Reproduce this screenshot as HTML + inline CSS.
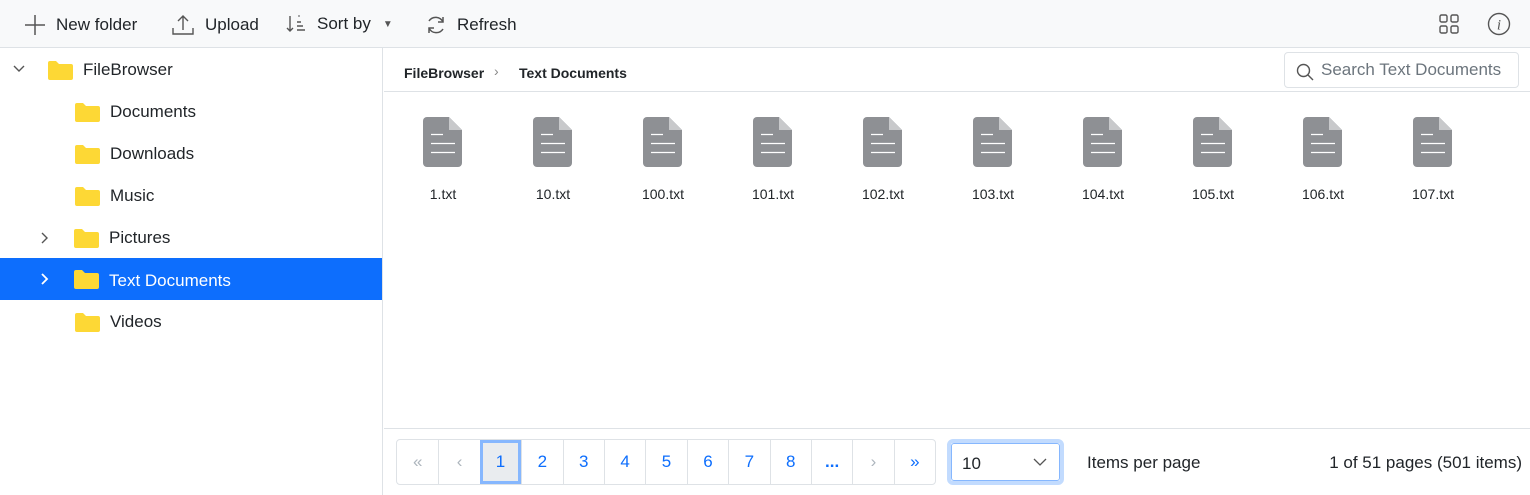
<!DOCTYPE html>
<html><head><meta charset="utf-8"><style>
*{box-sizing:border-box;margin:0;padding:0}
body{width:1530px;height:495px;overflow:hidden;background:#fff;font-family:"Liberation Sans",sans-serif;color:#212529;position:relative}
.tb{position:absolute;left:0;top:0;width:1530px;height:48px;background:#f8f9fa;border-bottom:1px solid #dee2e6}
.tbi{position:absolute;top:14px;font-size:17px;color:#212529;display:flex;align-items:center}
.tbi svg{margin-right:10px}
.left{position:absolute;left:0;top:48px;width:383px;height:447px;border-right:1px solid #dee2e6}
.row{position:absolute;left:0;width:382px;height:42px;font-size:17px;display:flex;align-items:center;margin-top:1px}
.row .fd{position:absolute;top:11px}
.row span{position:absolute}
.sel{background:#0d6efd;color:#fff;margin-top:0}
.bc{position:absolute;left:384px;top:48px;width:1146px;height:44px;border-bottom:1px solid #dee2e6;font-size:14px}
.file{position:absolute;top:116px;width:80px;text-align:center;font-size:14px}
.file svg{display:block;margin:0 auto 18px}
.pg{position:absolute;left:384px;top:428px;width:1146px;height:67px;border-top:1px solid #dee2e6}
.pgr{position:absolute;left:12px;top:10px;height:46px;border:1px solid #dee2e6;border-radius:4px;display:flex}
.pgr div{width:41.4px;height:44px;border-left:1px solid #dee2e6;display:flex;align-items:center;justify-content:center;color:#0d6efd;font-size:17px}
.pgr div:first-child{border-left:none}
</style></head><body>
<div class="tb">
 <div class="tbi" style="left:24px"><svg width="22" height="22" viewBox="0 0 22 22"><path d="M11 1v20M1 11h20" stroke="#555" stroke-width="1.5"/></svg>New folder</div>
 <div class="tbi" style="left:171px"><svg width="24" height="22" viewBox="0 0 24 22"><path d="M12 2v14M7 7l5-5 5 5M2 14v6h20v-6" stroke="#555" stroke-width="1.4" fill="none"/></svg>Upload</div>
 <div class="tbi" style="left:285px"><svg width="22" height="20" viewBox="0 0 22 20"><path d="M5 2v15M2 14l3 3 3-3M12 8h4M12 12h6M12 16h8" stroke="#555" stroke-width="1.4" fill="none"/><path d="M13 2l2 0" stroke="#555"/></svg>Sort by<span style="margin-left:12px;font-size:10px;color:#555">▼</span></div>
 <div class="tbi" style="left:425px"><svg width="22" height="22" viewBox="0 0 22 22"><path d="M18 8a8 8 0 0 0-14-1M4 14a8 8 0 0 0 14 1" stroke="#555" stroke-width="1.5" fill="none"/><path d="M18 3v5h-5M4 19v-5h5" stroke="#555" stroke-width="1.5" fill="none"/></svg>Refresh</div>
 <svg style="position:absolute;left:1439px;top:14px" width="21" height="20" viewBox="0 0 21 20"><g fill="none" stroke="#555" stroke-width="1.4"><rect x="1" y="1" width="7" height="7" rx="1.5"/><rect x="12" y="1" width="7" height="7" rx="1.5"/><rect x="1" y="12" width="7" height="7" rx="1.5"/><rect x="12" y="12" width="7" height="7" rx="1.5"/></g></svg>
 <svg style="position:absolute;left:1487px;top:12px" width="24" height="24" viewBox="0 0 24 24"><circle cx="12" cy="12" r="10.5" fill="none" stroke="#555" stroke-width="1.4"/><text x="12" y="17.5" font-family="Liberation Serif" font-style="italic" font-size="15" fill="#555" text-anchor="middle">i</text></svg>
</div>
<div class="left">
 <div class="row" style="top:0"><svg style="position:absolute;left:13px;top:16px" width="12" height="8"><path d="M1 1l5 5 5-5" stroke="#555" stroke-width="1.4" fill="none"/></svg><svg class="fd" style="left:48px" width="25" height="20" viewBox="0 0 25 20"><path d="M0 3a2 2 0 0 1 2-2h6l3 3h12a2 2 0 0 1 2 2v12a2 2 0 0 1-2 2H2a2 2 0 0 1-2-2z" fill="#fdd835"/></svg><span style="left:83px">FileBrowser</span></div>
 <div class="row" style="top:42px"><svg class="fd" style="left:75px" width="25" height="20" viewBox="0 0 25 20"><path d="M0 3a2 2 0 0 1 2-2h6l3 3h12a2 2 0 0 1 2 2v12a2 2 0 0 1-2 2H2a2 2 0 0 1-2-2z" fill="#fdd835"/></svg><span style="left:110px">Documents</span></div>
 <div class="row" style="top:84px"><svg class="fd" style="left:75px" width="25" height="20" viewBox="0 0 25 20"><path d="M0 3a2 2 0 0 1 2-2h6l3 3h12a2 2 0 0 1 2 2v12a2 2 0 0 1-2 2H2a2 2 0 0 1-2-2z" fill="#fdd835"/></svg><span style="left:110px">Downloads</span></div>
 <div class="row" style="top:126px"><svg class="fd" style="left:75px" width="25" height="20" viewBox="0 0 25 20"><path d="M0 3a2 2 0 0 1 2-2h6l3 3h12a2 2 0 0 1 2 2v12a2 2 0 0 1-2 2H2a2 2 0 0 1-2-2z" fill="#fdd835"/></svg><span style="left:110px">Music</span></div>
 <div class="row" style="top:168px"><svg style="position:absolute;left:41px;top:15px" width="8" height="12"><path d="M1 1l5 5-5 5" stroke="#555" stroke-width="1.4" fill="none"/></svg><svg class="fd" style="left:74px" width="25" height="20" viewBox="0 0 25 20"><path d="M0 3a2 2 0 0 1 2-2h6l3 3h12a2 2 0 0 1 2 2v12a2 2 0 0 1-2 2H2a2 2 0 0 1-2-2z" fill="#fdd835"/></svg><span style="left:109px">Pictures</span></div>
 <div class="row sel" style="top:210px"><svg style="position:absolute;left:41px;top:15px" width="8" height="12"><path d="M1 1l5 5-5 5" stroke="#fff" stroke-width="1.8" fill="none"/></svg><svg class="fd" style="left:74px" width="25" height="20" viewBox="0 0 25 20"><path d="M0 3a2 2 0 0 1 2-2h6l3 3h12a2 2 0 0 1 2 2v12a2 2 0 0 1-2 2H2a2 2 0 0 1-2-2z" fill="#fdd835"/></svg><span style="left:109px;top:13px">Text Documents</span></div>
 <div class="row" style="top:252px"><svg class="fd" style="left:75px" width="25" height="20" viewBox="0 0 25 20"><path d="M0 3a2 2 0 0 1 2-2h6l3 3h12a2 2 0 0 1 2 2v12a2 2 0 0 1-2 2H2a2 2 0 0 1-2-2z" fill="#fdd835"/></svg><span style="left:110px">Videos</span></div>
</div>
<div class="bc">
 <span style="position:absolute;left:20px;top:17px;font-weight:600">FileBrowser</span>
 <span style="position:absolute;left:110px;top:15px;color:#888">›</span>
 <span style="position:absolute;left:135px;top:17px;font-weight:600">Text Documents</span>
 <div style="position:absolute;left:900px;top:4px;width:235px;height:36px;border:1px solid #dee2e6;border-radius:4px;font-size:17px;color:#6c757d">
  <svg style="position:absolute;left:11px;top:10px" width="18" height="18" viewBox="0 0 18 18"><circle cx="7.5" cy="7.5" r="6" fill="none" stroke="#555" stroke-width="1.4"/><path d="M12 12l5 5" stroke="#555" stroke-width="1.4"/></svg>
  <span style="position:absolute;left:36px;top:7px">Search Text Documents</span></div>
</div>
<div id="files"></div>
<div class="pg">
 <div class="pgr">
  <div style="color:#adb5bd">«</div><div style="color:#adb5bd">‹</div>
  <div style="background:#e9ecef;border:3px solid #86b7fe;color:#0d6efd">1</div>
  <div>2</div><div>3</div><div>4</div><div>5</div><div>6</div><div>7</div><div>8</div><div style="font-weight:bold">...</div><div style="color:#adb5bd">›</div><div>»</div>
 </div>
 <div style="position:absolute;left:563px;top:10px;width:117px;height:46px;border:4px solid #c2dbfe;border-radius:6px"><div style="position:absolute;inset:0;border:1px solid #86b7fe;border-radius:3px;font-size:17px;padding:10px 0 0 10px">10<svg style="position:absolute;right:12px;top:14px" width="14" height="8"><path d="M1 1l6 6 6-6" stroke="#555" stroke-width="1.3" fill="none"/></svg></div></div>
 <span style="position:absolute;left:703px;top:24px;font-size:17px">Items per page</span>
 <span style="position:absolute;right:8px;top:24px;font-size:17px">1 of 51 pages (501 items)</span>
</div>
<script>
var n=["1","10","100","101","102","103","104","105","106","107"],h="";
n.forEach(function(t,i){h+='<div class="file" style="left:'+(403+i*110)+'px"><svg width="40" height="52" viewBox="0 0 40 52"><path d="M4 1h22l13 13v33a4 4 0 0 1-4 4H4a4 4 0 0 1-4-4V5a4 4 0 0 1 4-4z" fill="#8e9094"/><path d="M26 1l13 13H26z" fill="#c8c9cb"/><path d="M8 18.5h12M8 27.5h24M8 36.5h24" stroke="#fff" stroke-width="1.3"/></svg>'+t+'.txt</div>'});
document.getElementById("files").innerHTML=h;
</script>
</body></html>
